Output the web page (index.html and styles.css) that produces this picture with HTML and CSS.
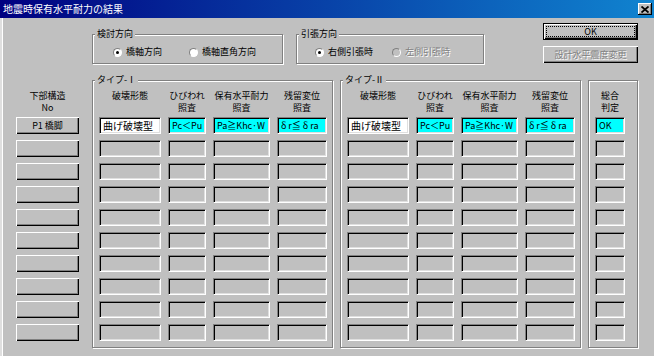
FILE: index.html
```html
<!DOCTYPE html>
<html lang="ja">
<head>
    <meta charset="UTF-8">
    <title>地震時保有水平耐力の結果</title>
    <link rel="stylesheet" href="styles.css">
</head>
<body>
<div class="window">
    <div class="titlebar">
        <span class="title">地震時保有水平耐力の結果</span>
        <span class="close">
            <svg width="8" height="7" viewBox="0 0 8 7"><path d="M0.5 0.5 L7.5 6.5 M7.5 0.5 L0.5 6.5" stroke="#000" stroke-width="1.8"/></svg>
        </span>
    </div>

    <div class="top">
        <fieldset class="group direction">
            <legend>検討方向</legend>
            <div class="options">
                <label class="option first"><span class="radio checked"></span>橋軸方向</label>
                <label class="option"><span class="radio"></span>橋軸直角方向</label>
            </div>
        </fieldset>
        <fieldset class="group tension">
            <legend>引張方向</legend>
            <div class="options">
                <label class="option first"><span class="radio checked"></span>右側引張時</label>
                <label class="option disabled"><span class="radio"></span>左側引張時</label>
            </div>
        </fieldset>
        <div class="actions">
            <button class="btn default"><span class="focus">OK</span></button>
            <button class="btn" disabled>設計水平震度変更</button>
        </div>
    </div>

    <div class="main">
        <!-- 下部構造 -->
        <div class="pier">
            <div class="heads">下部構造<br>No</div>
            <div class="pier-list">
                <button class="pier-btn">P1 橋脚</button>
                <button class="pier-btn"></button>
                <button class="pier-btn"></button>
                <button class="pier-btn"></button>
                <button class="pier-btn"></button>
                <button class="pier-btn"></button>
                <button class="pier-btn"></button>
                <button class="pier-btn"></button>
                <button class="pier-btn"></button>
                <button class="pier-btn"></button>
            </div>
        </div>

        <!-- タイプ-I -->
        <fieldset class="group type">
            <legend>タイプ-Ⅰ</legend>
            <div class="table">
                <div class="heads cols">
                    <div>破壊形態</div>
                    <div>ひびわれ<br>照査</div>
                    <div>保有水平耐力<br>照査</div>
                    <div>残留変位<br>照査</div>
                </div>
                <div class="rows cols">
                    <div class="field white">曲げ破壊型</div><div class="field cyan">Pc＜Pu</div><div class="field cyan">Pa≧Khc·W</div><div class="field cyan">δ r≦ δ ra</div>
                    <div class="field"></div><div class="field"></div><div class="field"></div><div class="field"></div>
                    <div class="field"></div><div class="field"></div><div class="field"></div><div class="field"></div>
                    <div class="field"></div><div class="field"></div><div class="field"></div><div class="field"></div>
                    <div class="field"></div><div class="field"></div><div class="field"></div><div class="field"></div>
                    <div class="field"></div><div class="field"></div><div class="field"></div><div class="field"></div>
                    <div class="field"></div><div class="field"></div><div class="field"></div><div class="field"></div>
                    <div class="field"></div><div class="field"></div><div class="field"></div><div class="field"></div>
                    <div class="field"></div><div class="field"></div><div class="field"></div><div class="field"></div>
                    <div class="field"></div><div class="field"></div><div class="field"></div><div class="field"></div>
                </div>
            </div>
        </fieldset>

        <!-- タイプ-II -->
        <fieldset class="group type">
            <legend>タイプ-Ⅱ</legend>
            <div class="table">
                <div class="heads cols">
                    <div>破壊形態</div>
                    <div>ひびわれ<br>照査</div>
                    <div>保有水平耐力<br>照査</div>
                    <div>残留変位<br>照査</div>
                </div>
                <div class="rows cols">
                    <div class="field white">曲げ破壊型</div><div class="field cyan">Pc＜Pu</div><div class="field cyan">Pa≧Khc·W</div><div class="field cyan">δ r≦ δ ra</div>
                    <div class="field"></div><div class="field"></div><div class="field"></div><div class="field"></div>
                    <div class="field"></div><div class="field"></div><div class="field"></div><div class="field"></div>
                    <div class="field"></div><div class="field"></div><div class="field"></div><div class="field"></div>
                    <div class="field"></div><div class="field"></div><div class="field"></div><div class="field"></div>
                    <div class="field"></div><div class="field"></div><div class="field"></div><div class="field"></div>
                    <div class="field"></div><div class="field"></div><div class="field"></div><div class="field"></div>
                    <div class="field"></div><div class="field"></div><div class="field"></div><div class="field"></div>
                    <div class="field"></div><div class="field"></div><div class="field"></div><div class="field"></div>
                    <div class="field"></div><div class="field"></div><div class="field"></div><div class="field"></div>
                </div>
            </div>
        </fieldset>

        <!-- 総合判定 -->
        <fieldset class="group total">
            <div class="table">
                <div class="heads">総合<br>判定</div>
                <div class="rows">
                    <div class="field cyan">OK</div>
                    <div class="field"></div>
                    <div class="field"></div>
                    <div class="field"></div>
                    <div class="field"></div>
                    <div class="field"></div>
                    <div class="field"></div>
                    <div class="field"></div>
                    <div class="field"></div>
                    <div class="field"></div>
                </div>
            </div>
        </fieldset>
    </div>
</div>
</body>
</html>
```

FILE: styles.css
```css
* {
    box-sizing: border-box;
}

body {
    margin: 0;
    background: #c0c0c0;
    color: #000;
    font-family: "Noto Sans CJK JP", "Liberation Sans", sans-serif;
    font-size: 9px;
}

.window {
    width: 654px;
    height: 356px;
    background: #c0c0c0;
    box-shadow: inset 2px 0 #dfdfdf, inset 3px 0 #fff;
    overflow: hidden;
}

/* タイトルバー */
.titlebar {
    height: 18px;
    display: flex;
    align-items: center;
    justify-content: space-between;
    padding: 0 2px 0 3px;
    background: linear-gradient(90deg, #000080, #1084d0);
}

.title {
    color: #fff;
    font-size: 10px;
    line-height: 18px;
}

.close {
    width: 14px;
    height: 12px;
    display: flex;
    align-items: center;
    justify-content: center;
    background: #c0c0c0;
    box-shadow: inset -1px -1px #000, inset 1px 1px #fff, inset -2px -2px #808080;
}

/* グループ枠 */
.group {
    margin: 0;
    padding: 0;
    min-width: 0;
    border: 1px solid #808080;
    box-shadow: inset 1px 1px #fff, 1px 1px #fff;
}

.group legend {
    margin-left: 2px;
    padding: 0 2px;
    line-height: 12px;
    font-size: 9px;
    background: #c0c0c0;
}

/* 上段 */
.top {
    display: flex;
    align-items: flex-start;
    height: 56px;
    padding: 5px 16px 0 92px;
}

.direction {
    width: 191px;
    margin-top: 5px;
}

.tension {
    width: 188px;
    margin-top: 5px;
    margin-left: 13px;
}

.options {
    display: flex;
    align-items: center;
    height: 12px;
    margin: 6px 0 5px 20px;
}

.tension .options {
    margin-left: 18px;
}

.option {
    display: flex;
    align-items: center;
    line-height: 12px;
    white-space: nowrap;
}

.option.first {
    width: 76px;
}

.tension .option.first {
    width: 77px;
}

.radio {
    width: 9px;
    height: 9px;
    margin-right: 4px;
    border-radius: 50%;
    border: 1px solid;
    border-color: #808080 #fff #fff #808080;
    background: #fff;
    display: flex;
    align-items: center;
    justify-content: center;
}

.radio.checked::after {
    content: '';
    width: 3px;
    height: 3px;
    border-radius: 50%;
    background: #000;
}

.option.disabled {
    color: #808080;
    text-shadow: 1px 1px 0 #fff;
}

.option.disabled .radio {
    background: #c0c0c0;
}

.actions {
    margin-left: auto;
    width: 95px;
    display: flex;
    flex-direction: column;
    gap: 6px;
}

.btn {
    height: 17px;
    margin: 0;
    padding: 0;
    border: none;
    background: #c0c0c0;
    font-family: inherit;
    font-size: 9px;
    color: #000;
    box-shadow: inset 1px 1px #fff, inset -1px -1px #000, inset -2px -2px #808080;
}

.btn.default {
    border: 1px solid #000;
    padding: 2px;
}

.btn .focus {
    display: block;
    height: 100%;
    line-height: 9px;
    border: 1px dotted #000;
}

.btn:disabled {
    color: #808080;
    text-shadow: 1px 1px 0 #fff;
}

/* 下段 */
.main {
    display: flex;
    align-items: flex-start;
    padding-left: 16px;
}

.heads {
    height: 24px;
    margin-bottom: 3px;
    line-height: 12px;
    text-align: center;
    white-space: nowrap;
}

.cols {
    display: grid;
    grid-template-columns: 62px 38px 57px 50px;
    column-gap: 7px;
}

.rows {
    display: grid;
    grid-auto-rows: 17px;
    row-gap: 6px;
}

.pier {
    width: 63px;
    padding-top: 16px;
}

.pier-list {
    display: flex;
    flex-direction: column;
    gap: 6px;
}

.pier-btn {
    height: 17px;
    margin: 0;
    padding: 0;
    border: none;
    background: #c0c0c0;
    font-family: inherit;
    font-size: 9px;
    color: #000;
    box-shadow: inset 1px 1px #fff, inset -1px -1px #000, inset -2px -2px #808080;
}

.type {
    margin-left: 13px;
}

.type + .type {
    margin-left: 7px;
}

.type .table {
    padding: 4px 5px 6px 6px;
}

.total {
    width: 50px;
    margin-left: 7px;
    margin-top: 6px;
}

.total .table {
    padding: 9px 12px 6px 6px;
}

.field {
    height: 17px;
    padding-left: 3px;
    border: 1px solid;
    border-color: #808080 #fff #fff #808080;
    box-shadow: inset 1px 1px #000, inset -1px -1px #dfdfdf;
    background: #c0c0c0;
    line-height: 15px;
    white-space: nowrap;
    overflow: hidden;
}

.field.white {
    background: #fff;
    font-size: 10px;
}

.field.cyan {
    background: #0ff;
}
```
